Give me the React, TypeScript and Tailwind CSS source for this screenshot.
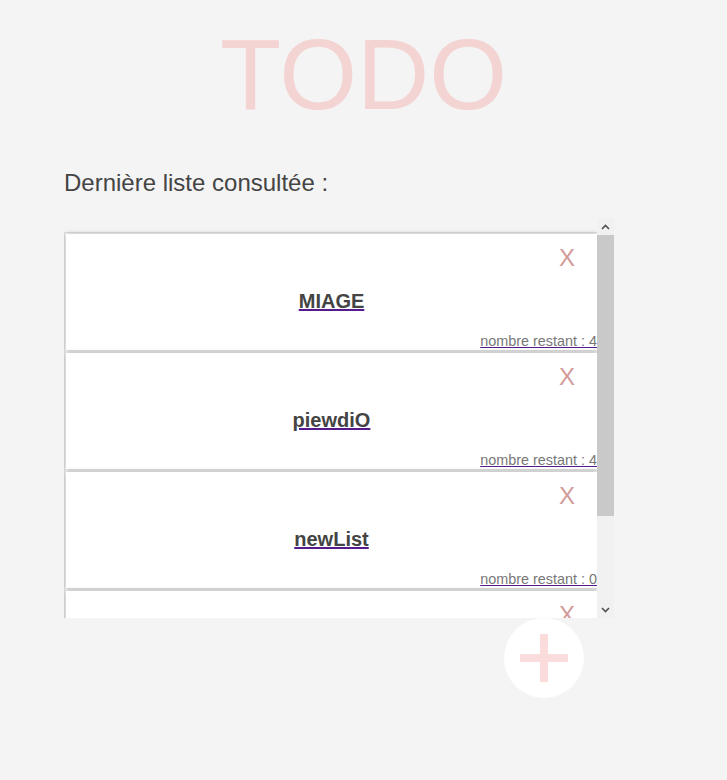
const lists = [
  { name: "MIAGE", restant: 4 },
  { name: "piewdiO", restant: 4 },
  { name: "newList", restant: 0 },
  { name: "courses", restant: 2 },
]

const ListCard = ({ name, restant }: { name: string; restant: number }) => {
  return (
    <div className="relative h-[116px] mb-[3px] bg-white shadow-[0_0_5px_rgba(0,0,0,0.25)]">
      <button className="absolute top-0 right-[8px] w-[44px] h-[44px] bg-white text-[24px] text-[#d39a9a] leading-none pt-[4px]">
        X
      </button>
      <div className="pt-[55px] text-center">
        <a href="#" className="text-[20px] font-bold text-[#444] underline decoration-[#551a8b] leading-[24px]">
          {name}
        </a>
      </div>
      <div className="absolute right-0 bottom-0 text-[14.4px] leading-[17px] text-[#777] underline decoration-[#551a8b] whitespace-nowrap">
        nombre restant : {restant}
      </div>
    </div>
  )
}

const Chevron = ({ up }: { up: boolean }) => (
  <svg width="9" height="6" viewBox="0 0 9 6">
    <path d={up ? "M1 5 L4.5 1.5 L8 5" : "M1 1 L4.5 4.5 L8 1"} fill="none" stroke="#505050" strokeWidth="1.6" />
  </svg>
)

const App = () => {
  return (
    <div className="min-h-screen w-full bg-[#f4f4f4] font-['Liberation_Sans',Arial,sans-serif]">
      <div className="pt-[24px] text-center text-[100px] leading-none text-[#f4d3d3]">TODO</div>
      <div className="ml-[64px] mt-[41px] text-[24px] text-[#444]">Dernière liste consultée :</div>
      <div className="ml-[64px] mt-[17px] w-[550px] h-[400px] flex">
        <div className="flex-1 overflow-hidden pt-[14px]">
          <div className="border-l border-t border-[#ddd] pl-px pt-px">
            {lists.map((l) => (
              <ListCard key={l.name} name={l.name} restant={l.restant} />
            ))}
          </div>
        </div>
        <div className="w-[17px] bg-[#f1f1f1] flex flex-col">
          <div className="h-[17px] flex items-center justify-center">
            <Chevron up />
          </div>
          <div className="h-[281px] bg-[#c9c9c9]" />
          <div className="flex-1" />
          <div className="h-[17px] flex items-center justify-center">
            <Chevron up={false} />
          </div>
        </div>
      </div>
      <div className="ml-[504px] w-[80px] h-[80px] rounded-full bg-white flex items-center justify-center">
        <svg width="48" height="48" viewBox="0 0 48 48">
          <rect x="20" y="0" width="8" height="48" fill="#fbdcdc" />
          <rect x="0" y="20" width="48" height="8" fill="#fbdcdc" />
        </svg>
      </div>
    </div>
  )
}

export default App
